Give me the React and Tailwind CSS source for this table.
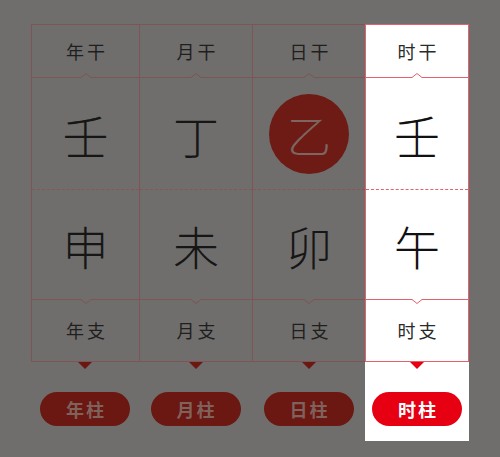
import React from 'react'

// 四柱 — the 时柱 column is highlighted, the rest sit under the dim overlay
const pillars = [
    { label: '年', gan: '壬', zhi: '申', width: 'w-[108px]' },
    { label: '月', gan: '丁', zhi: '未', width: 'w-[113px]' },
    { label: '日', gan: '乙', zhi: '卯', width: 'w-[113px]', circle: true },
    { label: '时', gan: '壬', zhi: '午', width: 'w-[104px]', active: true },
]

function NotchUp({ line, fill }) {
    return (
        <svg
            className="absolute left-1/2 -translate-x-1/2 bottom-[-1px]"
            width="10"
            height="5"
            viewBox="0 0 10 5"
        >
            <path d="M0 5 L0 4.5 L5 0.5 L10 4.5 L10 5 Z" fill={fill} />
            <path d="M0 4.5 L5 0.5 L10 4.5" fill="none" stroke={line} strokeWidth="1" />
        </svg>
    )
}

function NotchDown({ line, fill }) {
    return (
        <svg
            className="absolute left-1/2 -translate-x-1/2 top-[-1px]"
            width="10"
            height="5"
            viewBox="0 0 10 5"
        >
            <path d="M0 0 L0 0.5 L5 4.5 L10 0.5 L10 0 Z" fill={fill} />
            <path d="M0 0.5 L5 4.5 L10 0.5" fill="none" stroke={line} strokeWidth="1" />
        </svg>
    )
}

function Pillar({ p, last }) {
    const on = p.active
    const line = on ? '#e5606c' : '#7f5456'
    const fill = on ? '#ffffff' : '#6f6e6c'
    const lineCls = on ? 'border-[#e5606c]' : 'border-[#7f5456]'
    const dashCls = on ? 'border-[#e4606e]' : 'border-[#8a5558]'
    const textCls = on ? 'text-[#2a2a2a]' : 'text-[#1f1f1f]'
    const bigCls = on ? 'text-[#111111]' : 'text-[#161616]'

    return (
        <div className={`${p.width} flex flex-col ${on ? 'bg-white' : ''}`}>
            <div
                className={`border-t border-l border-b ${last ? 'border-r' : ''} ${lineCls}`}
            >
                <div
                    className={`relative h-[53px] border-b ${lineCls} flex items-center justify-center text-[18px] tracking-[3px] pl-[3px] ${textCls}`}
                >
                    {p.label}干
                    <NotchUp line={line} fill={fill} />
                </div>
                <div
                    className={`h-[112px] border-b border-dashed ${dashCls} flex items-center justify-center`}
                >
                    {p.circle ? (
                        <div className="w-[80px] h-[80px] rounded-full bg-[#6e1b15] flex items-center justify-center text-[44px] font-light text-[#7d6660] leading-none">
                            {p.gan}
                        </div>
                    ) : (
                        <span className={`text-[46px] font-light leading-none ${bigCls}`}>
                            {p.gan}
                        </span>
                    )}
                </div>
                <div
                    className={`h-[110px] border-b ${lineCls} flex items-center justify-center`}
                >
                    <span className={`text-[46px] font-light leading-none ${bigCls}`}>
                        {p.zhi}
                    </span>
                </div>
                <div
                    className={`relative h-[61px] flex items-center justify-center text-[18px] tracking-[3px] pl-[3px] ${textCls}`}
                >
                    {p.label}支
                    <NotchDown line={line} fill={fill} />
                </div>
            </div>
            <div className="flex justify-center">
                <svg width="14" height="7" viewBox="0 0 14 7">
                    <path d="M0 0 L14 0 L7 7 Z" fill={on ? '#e60012' : '#6b1712'} />
                </svg>
            </div>
            <div className="flex justify-center mt-[23px] pb-[15px]">
                <div
                    className={`w-[90px] h-[34px] rounded-full flex items-center justify-center text-[18px] font-bold tracking-[2px] pl-[2px] ${
                        on ? 'bg-[#e60012] text-white' : 'bg-[#6b1712] text-[#80625c]'
                    }`}
                >
                    {p.label}柱
                </div>
            </div>
        </div>
    )
}

export default function App() {
    return (
        <div
            className="min-h-screen w-full bg-[#6f6e6c] pt-[24px] pl-[31px]"
            style={{ fontFamily: '"Noto Sans CJK SC", "Noto Sans", sans-serif' }}
        >
            <div className="flex">
                {pillars.map((p, i) => (
                    <Pillar key={i} p={p} last={i === pillars.length - 1} />
                ))}
            </div>
        </div>
    )
}
